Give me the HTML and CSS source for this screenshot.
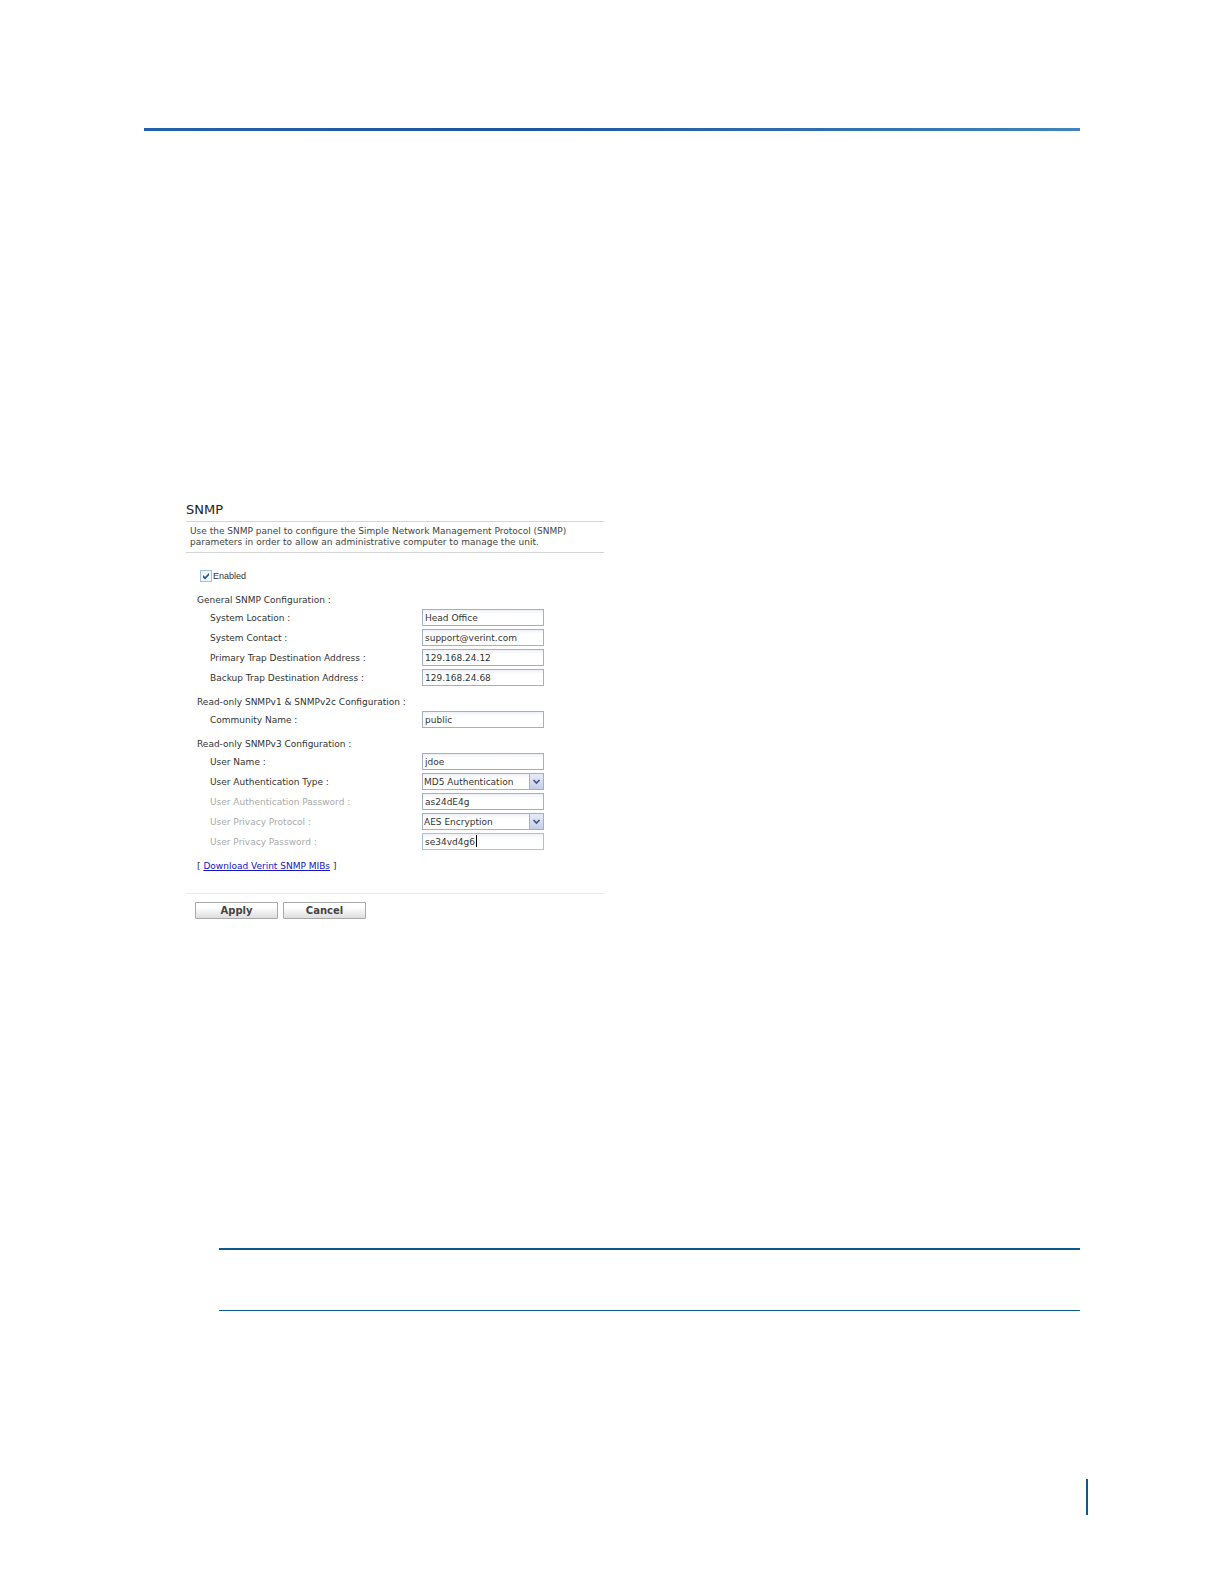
FILE: index.html
```html
<!DOCTYPE html>
<html lang="en">
<head>
    <meta charset="UTF-8">
    <meta name="viewport" content="width=device-width, initial-scale=1.0">
    <title>SNMP</title>
    <link rel="stylesheet" href="styles.css">
</head>
<body>

    <header class="page-header"></header>

    <main class="content">
        <form class="panel">
            <h1>SNMP</h1>
            <p class="intro">Use the SNMP panel to configure the Simple Network Management Protocol (SNMP)<br>parameters in order to allow an administrative computer to manage the unit.</p>

            <div class="settings">
                <div class="enable">
                    <span class="check">
                        <input type="checkbox" id="enabled" checked>
                        <svg viewBox="0 0 12 12"><path d="M3 5v2.5l2 2L9 5.2V3L5 7z" fill="#24508c"/></svg>
                    </span>
                    <label for="enabled">Enabled</label>
                </div>

                <section>
                    <h2>General SNMP Configuration :</h2>
                    <div class="row">
                        <label for="location">System Location :</label>
                        <input type="text" id="location" value="Head Office">
                    </div>
                    <div class="row">
                        <label for="contact">System Contact :</label>
                        <input type="text" id="contact" value="support@verint.com">
                    </div>
                    <div class="row">
                        <label for="primary-trap">Primary Trap Destination Address :</label>
                        <input type="text" id="primary-trap" value="129.168.24.12">
                    </div>
                    <div class="row">
                        <label for="backup-trap">Backup Trap Destination Address :</label>
                        <input type="text" id="backup-trap" value="129.168.24.68">
                    </div>
                </section>

                <section>
                    <h2>Read-only SNMPv1 &amp; SNMPv2c Configuration :</h2>
                    <div class="row">
                        <label for="community">Community Name :</label>
                        <input type="text" id="community" value="public">
                    </div>
                </section>

                <section>
                    <h2>Read-only SNMPv3 Configuration :</h2>
                    <div class="row">
                        <label for="user">User Name :</label>
                        <input type="text" id="user" value="jdoe">
                    </div>
                    <div class="row">
                        <label for="auth-type">User Authentication Type :</label>
                        <span class="dropdown">
                            <select id="auth-type">
                                <option>MD5 Authentication</option>
                            </select>
                            <svg viewBox="0 0 13 15"><path d="M3.5 6l3 3 3-3" fill="none" stroke="#405080" stroke-width="1.6"/></svg>
                        </span>
                    </div>
                    <div class="row muted">
                        <label for="auth-password">User Authentication Password :</label>
                        <input type="text" id="auth-password" value="as24dE4g">
                    </div>
                    <div class="row muted">
                        <label for="privacy">User Privacy Protocol :</label>
                        <span class="dropdown">
                            <select id="privacy">
                                <option>AES Encryption</option>
                            </select>
                            <svg viewBox="0 0 13 15"><path d="M3.5 6l3 3 3-3" fill="none" stroke="#405080" stroke-width="1.6"/></svg>
                        </span>
                    </div>
                    <div class="row muted">
                        <label for="privacy-password">User Privacy Password :</label>
                        <span class="active-field">
                            <input type="text" id="privacy-password" value="se34vd4g6">
                            <span class="caret"></span>
                        </span>
                    </div>
                </section>

                <p class="download">[ <a href="#">Download Verint SNMP MIBs</a> ]</p>
            </div>

            <div class="actions">
                <button type="submit">Apply</button>
                <button type="reset">Cancel</button>
            </div>
        </form>

        <aside class="note"></aside>
    </main>

    <footer class="page-footer"></footer>

</body>
</html>
```

FILE: styles.css
```css
* {
    box-sizing: border-box;
}

body {
    margin: 0;
    padding: 128px 144px 0;
    background-color: #fff;
    font-family: "DejaVu Sans", Verdana, sans-serif;
    font-size: 9px;
    line-height: 12px;
    color: #333;
}

.page-header {
    height: 3px;
    background: linear-gradient(to right, #2461ad, #1c55a0 40%, #4083bd);
}

.content {
    padding-top: 367px;
}

.panel {
    max-width: 418px;
    margin-left: 42px;
}

h1 {
    margin: 0;
    padding: 4px 0 3px;
    font-size: 13px;
    font-weight: normal;
    line-height: 16px;
    color: #222;
}

.intro {
    margin: 0;
    padding: 4px 0 4px 4px;
    border-top: 1px solid #d5d5d5;
    border-bottom: 1px solid #d5d5d5;
    line-height: 11px;
    white-space: nowrap;
    color: #444;
}

.settings {
    padding: 17px 0 21px 11px;
}

.enable {
    display: flex;
    align-items: center;
    gap: 1px;
    margin-bottom: 12px;
    padding-left: 3px;
    font-family: "Liberation Sans", Arial, sans-serif;
}

.check {
    position: relative;
    width: 12px;
    height: 12px;
}

.check input {
    appearance: none;
    display: block;
    width: 12px;
    height: 12px;
    margin: 0;
    border: 1px solid #9fc0e4;
    background-color: #f4f8fd;
}

.check svg {
    position: absolute;
    inset: 0;
    pointer-events: none;
}

section {
    margin-bottom: 10px;
}

h2 {
    margin: 0 0 3px;
    font-size: 9px;
    font-weight: normal;
    line-height: 12px;
}

.row {
    display: grid;
    grid-template-columns: 212px 122px;
    align-items: center;
    padding-left: 13px;
    margin-bottom: 3px;
}

.muted label {
    color: #aaa;
}

input[type="text"],
select {
    display: block;
    appearance: none;
    width: 100%;
    height: 17px;
    margin: 0;
    padding: 0 2px;
    border: 1px solid #a3aeca;
    border-radius: 0;
    outline: none;
    background: linear-gradient(#eef1f8, #fff 4px);
    font-family: inherit;
    font-size: 9px;
    color: #333;
}

select {
    padding: 0 1px;
}

.dropdown,
.active-field {
    position: relative;
}

.dropdown svg {
    position: absolute;
    top: 1px;
    right: 1px;
    width: 14px;
    height: 15px;
    border-left: 1px solid #a3aeca;
    background: linear-gradient(#e6ebf7, #c5cee6);
    pointer-events: none;
}

.active-field input[type="text"] {
    border-color: #a3c4e6;
}

.caret {
    position: absolute;
    top: 2px;
    left: 54px;
    width: 1px;
    height: 12px;
    background-color: #000;
}

.download {
    margin: 0;
}

.download a {
    color: #1414c8;
}

.actions {
    display: flex;
    gap: 5px;
    padding: 8px 0 0 9px;
    border-top: 1px solid #ebebeb;
}

button {
    width: 83px;
    height: 17px;
    padding: 0;
    border: 1px solid #a9a9a9;
    border-radius: 1px;
    background: linear-gradient(#fff 30%, #ddd);
    font-family: inherit;
    font-size: 10px;
    font-weight: bold;
    line-height: 12px;
    color: #444;
}

.note {
    height: 63px;
    margin: 329px 0 0 75px;
    border-top: 2px solid #0a5c8e;
    border-bottom: 1px solid #0a5c8e;
}

.page-footer {
    height: 36px;
    margin: 168px -8px 0 0;
    border-right: 2px solid #0a5c8e;
}
```
